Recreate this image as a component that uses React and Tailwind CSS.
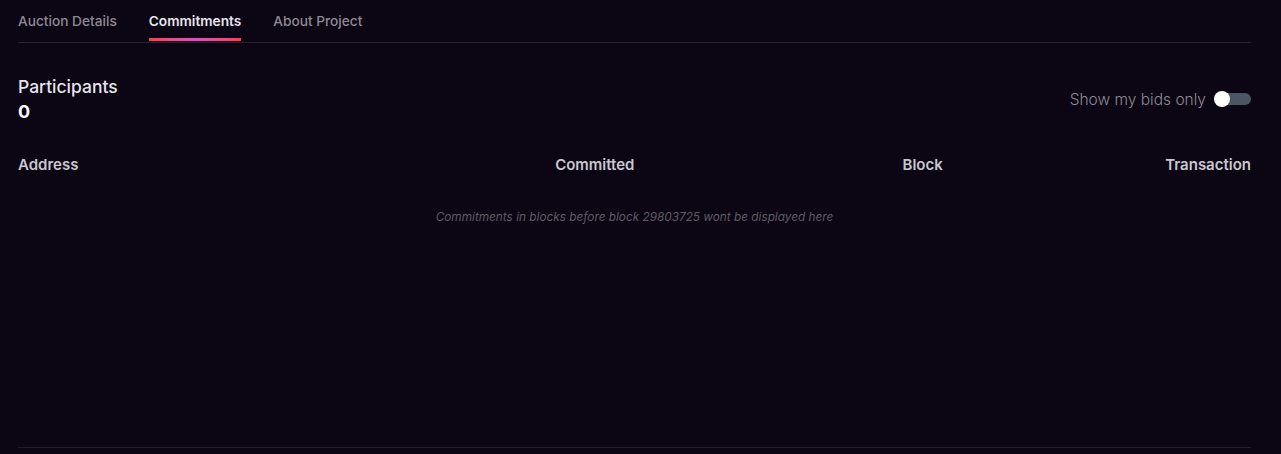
export default function App() {
  const font = { fontFamily: "Inter, 'Noto Sans', sans-serif" };
  return (
    <div className="min-h-[454px] w-full bg-[#0c0614]" style={font}>
      <div className="pl-[18px] pr-[30px]">
        <div className="flex gap-8 border-b border-[#24222c] h-[43px]">
          <div className="text-[13.7px] leading-[20px] text-[#8d8a93] font-medium pt-[11px] cursor-pointer">Auction Details</div>
          <div className="relative text-[13.7px] leading-[20px] text-[#e6e4ea] font-semibold pt-[11px] h-full cursor-pointer">
            Commitments
            <span className="absolute left-0 right-0 bottom-[1px] h-[3px] bg-gradient-to-r from-[#ff3b47] via-[#e946c0] to-[#ff3b47]"></span>
          </div>
          <div className="text-[13.7px] leading-[20px] text-[#8d8a93] font-medium pt-[11px] cursor-pointer">About Project</div>
        </div>

        <div className="flex items-end justify-between mt-[33px]">
          <div>
            <div className="text-[17.5px] leading-[22px] text-[#e6e4ea] font-medium">Participants</div>
            <div className="text-[18px] leading-[24px] text-white font-bold mt-[2px]">0</div>
          </div>
          <div className="flex items-center gap-[8px] mb-[13px]">
            <span className="text-[15.5px] text-[#8d8a93] font-light">Show my bids only</span>
            <div className="relative w-[37px] h-[12px] rounded-full bg-[#4b5563]">
              <span className="absolute left-0 top-[-2px] w-[16px] h-[16px] rounded-full bg-white"></span>
            </div>
          </div>
        </div>

        <div className="grid grid-cols-4 mt-[30px] text-[15px] font-semibold text-[#c9c6cf]">
          <div>Address</div>
          <div className="text-right">Committed</div>
          <div className="text-right">Block</div>
          <div className="text-right">Transaction</div>
        </div>

        <div className="text-center italic text-[11.8px] text-[#5d5a63] mt-[32px]">
          Commitments in blocks before block 29803725 wont be displayed here
        </div>

        <div className="h-[222px] border-b border-[#1f1d26]"></div>
      </div>
    </div>
  );
}
